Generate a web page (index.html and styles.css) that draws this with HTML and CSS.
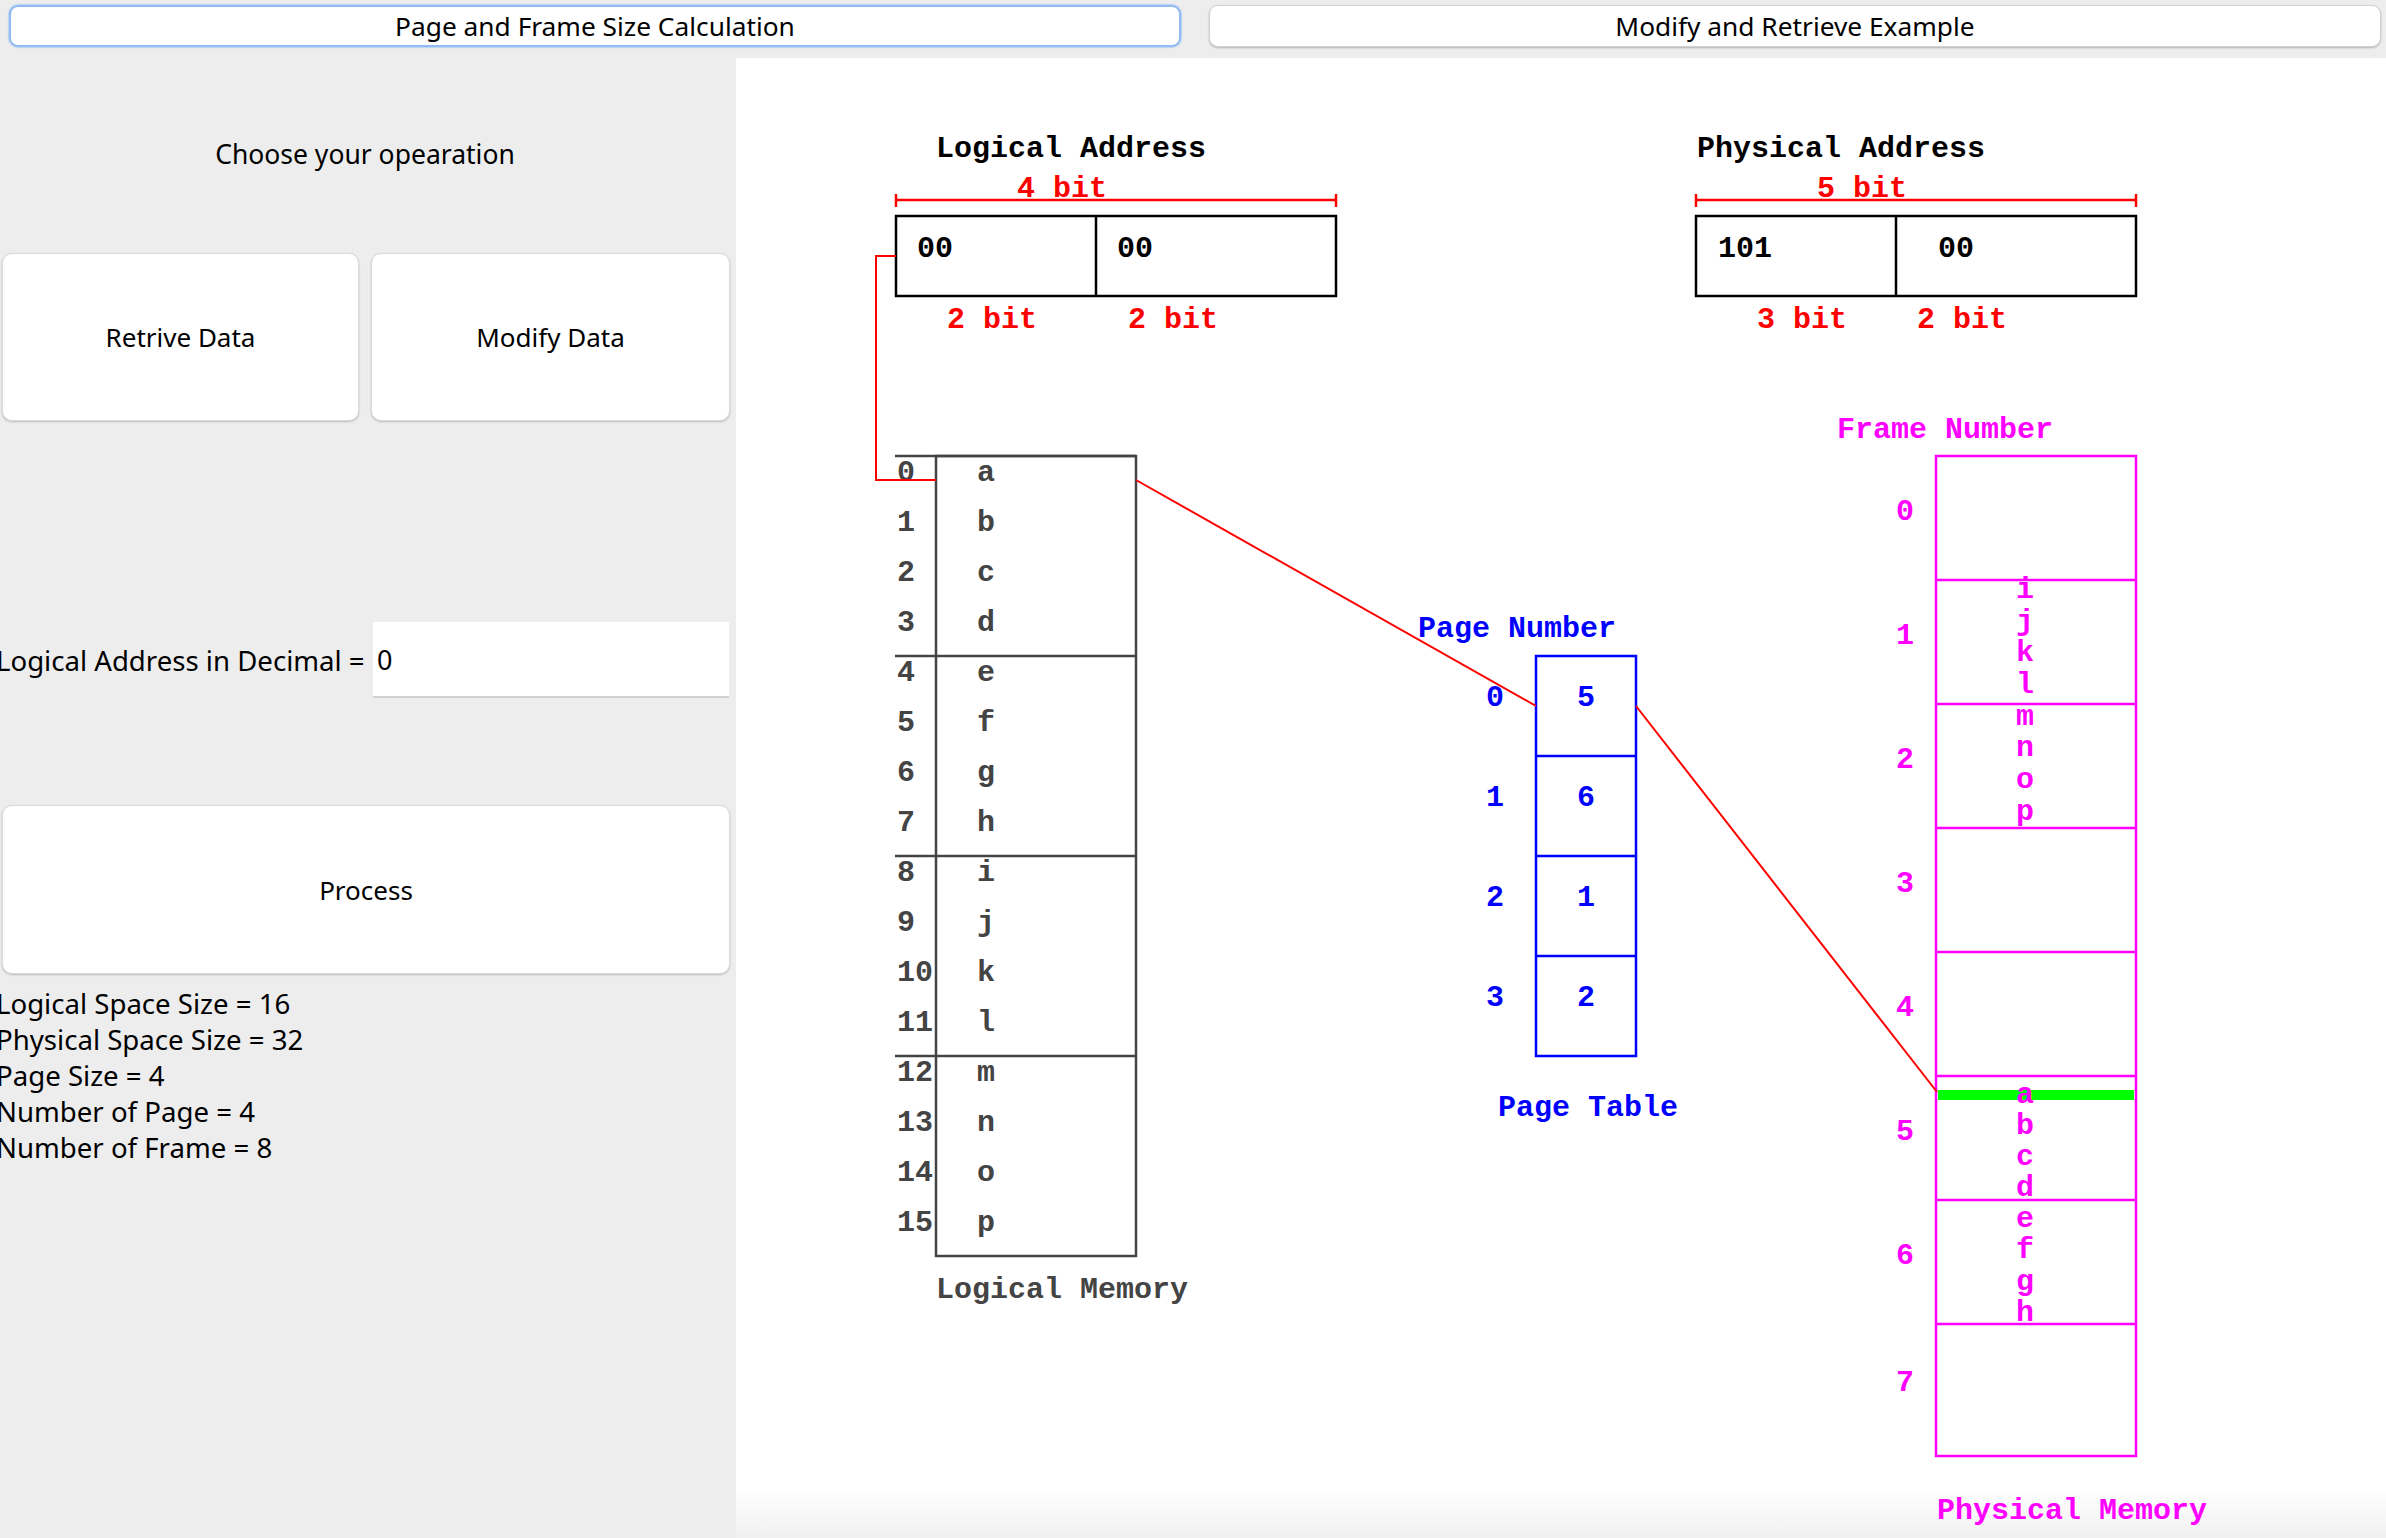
FILE: index.html
```html
<!DOCTYPE html>
<html>
<head>
<meta charset="utf-8">
<link rel="stylesheet" href="styles.css">
</head>
<body>
<div class="app">
  <div class="tabs">
    <div class="tab tab-active">Page and Frame Size Calculation</div>
    <div class="tab">Modify and Retrieve Example</div>
  </div>
  <div class="main">
    <aside class="side">
      <div class="title">Choose your opearation</div>
      <div class="btn-row">
        <div class="btn">Retrive Data</div>
        <div class="btn">Modify Data</div>
      </div>
      <div class="addr-row">
        <span class="addr-label">Logical Address in Decimal =</span>
        <div class="field">0</div>
      </div>
      <div class="btn btn-process">Process</div>
      <div class="stats">
        <div>Logical Space Size = 16</div>
        <div>Physical Space Size = 32</div>
        <div>Page Size = 4</div>
        <div>Number of Page = 4</div>
        <div>Number of Frame = 8</div>
      </div>
    </aside>
    <div class="canvas">
      <svg class="diagram" width="1650" height="1480" viewBox="736 58 1650 1480" xmlns="http://www.w3.org/2000/svg">
        <!-- Logical address -->
        <text class="t t-black" x="936" y="157">Logical Address</text>
        <text class="t t-red" x="1017" y="197">4 bit</text>
        <g class="s-red">
          <line x1="896" y1="200" x2="1336" y2="200"/>
          <line x1="896" y1="194" x2="896" y2="207"/>
          <line x1="1336" y1="194" x2="1336" y2="207"/>
        </g>
        <g class="s-black">
          <rect x="896" y="216" width="440" height="80"/>
          <line x1="1096" y1="216" x2="1096" y2="296"/>
        </g>
        <text class="t t-black" x="917" y="257">00</text>
        <text class="t t-black" x="1117" y="257">00</text>
        <text class="t t-red" x="947" y="328">2 bit</text>
        <text class="t t-red" x="1128" y="328">2 bit</text>

        <!-- Physical address -->
        <text class="t t-black" x="1697" y="157">Physical Address</text>
        <text class="t t-red" x="1817" y="197">5 bit</text>
        <g class="s-red">
          <line x1="1696" y1="200" x2="2136" y2="200"/>
          <line x1="1696" y1="194" x2="1696" y2="207"/>
          <line x1="2136" y1="194" x2="2136" y2="207"/>
        </g>
        <g class="s-black">
          <rect x="1696" y="216" width="440" height="80"/>
          <line x1="1896" y1="216" x2="1896" y2="296"/>
        </g>
        <text class="t t-black" x="1718" y="257">101</text>
        <text class="t t-black" x="1938" y="257">00</text>
        <text class="t t-red" x="1757" y="328">3 bit</text>
        <text class="t t-red" x="1917" y="328">2 bit</text>

        <!-- Logical memory -->
        <g class="s-gray">
          <rect x="936" y="456" width="200" height="800"/>
          <line x1="895" y1="456" x2="1136" y2="456"/>
          <line x1="895" y1="656" x2="1136" y2="656"/>
          <line x1="895" y1="856" x2="1136" y2="856"/>
          <line x1="895" y1="1056" x2="1136" y2="1056"/>
        </g>
        <g class="t t-gray">
          <text x="897" y="481">0</text><text x="977" y="481">a</text>
          <text x="897" y="531">1</text><text x="977" y="531">b</text>
          <text x="897" y="581">2</text><text x="977" y="581">c</text>
          <text x="897" y="631">3</text><text x="977" y="631">d</text>
          <text x="897" y="681">4</text><text x="977" y="681">e</text>
          <text x="897" y="731">5</text><text x="977" y="731">f</text>
          <text x="897" y="781">6</text><text x="977" y="781">g</text>
          <text x="897" y="831">7</text><text x="977" y="831">h</text>
          <text x="897" y="881">8</text><text x="977" y="881">i</text>
          <text x="897" y="931">9</text><text x="977" y="931">j</text>
          <text x="897" y="981">10</text><text x="977" y="981">k</text>
          <text x="897" y="1031">11</text><text x="977" y="1031">l</text>
          <text x="897" y="1081">12</text><text x="977" y="1081">m</text>
          <text x="897" y="1131">13</text><text x="977" y="1131">n</text>
          <text x="897" y="1181">14</text><text x="977" y="1181">o</text>
          <text x="897" y="1231">15</text><text x="977" y="1231">p</text>
          <text x="936" y="1298">Logical Memory</text>
        </g>

        <!-- Page table -->
        <text class="t t-blue" x="1418" y="637">Page Number</text>
        <g class="s-blue">
          <rect x="1536" y="656" width="100" height="400"/>
          <line x1="1536" y1="756" x2="1636" y2="756"/>
          <line x1="1536" y1="856" x2="1636" y2="856"/>
          <line x1="1536" y1="956" x2="1636" y2="956"/>
        </g>
        <g class="t t-blue mid">
          <text x="1495" y="706">0</text><text x="1586" y="706">5</text>
          <text x="1495" y="806">1</text><text x="1586" y="806">6</text>
          <text x="1495" y="906">2</text><text x="1586" y="906">1</text>
          <text x="1495" y="1006">3</text><text x="1586" y="1006">2</text>
        </g>
        <text class="t t-blue" x="1498" y="1116">Page Table</text>

        <!-- Physical memory -->
        <text class="t t-mag" x="1837" y="438">Frame Number</text>
        <rect class="green" x="1938" y="1090" width="196" height="10"/>
        <g class="s-mag">
          <rect x="1936" y="456" width="200" height="1000"/>
          <line x1="1936" y1="580" x2="2136" y2="580"/>
          <line x1="1936" y1="704" x2="2136" y2="704"/>
          <line x1="1936" y1="828" x2="2136" y2="828"/>
          <line x1="1936" y1="952" x2="2136" y2="952"/>
          <line x1="1936" y1="1076" x2="2136" y2="1076"/>
          <line x1="1936" y1="1200" x2="2136" y2="1200"/>
          <line x1="1936" y1="1324" x2="2136" y2="1324"/>
        </g>
        <g class="t t-mag mid">
          <text x="1905" y="520">0</text>
          <text x="1905" y="644">1</text>
          <text x="1905" y="768">2</text>
          <text x="1905" y="892">3</text>
          <text x="1905" y="1016">4</text>
          <text x="1905" y="1140">5</text>
          <text x="1905" y="1264">6</text>
          <text x="1905" y="1391">7</text>
          <text x="2025" y="598">i</text>
          <text x="2025" y="630">j</text>
          <text x="2025" y="661">k</text>
          <text x="2025" y="693">l</text>
          <text x="2025" y="725">m</text>
          <text x="2025" y="756">n</text>
          <text x="2025" y="788">o</text>
          <text x="2025" y="820">p</text>
          <text x="2025" y="1103">a</text>
          <text x="2025" y="1134">b</text>
          <text x="2025" y="1165">c</text>
          <text x="2025" y="1196">d</text>
          <text x="2025" y="1227">e</text>
          <text x="2025" y="1258">f</text>
          <text x="2025" y="1290">g</text>
          <text x="2025" y="1321">h</text>
        </g>
        <text class="t t-mag" x="1937" y="1519">Physical Memory</text>

        <!-- Red mapping path -->
        <g class="s-red thin">
          <polyline points="896,256 876,256 876,480 936,480"/>
          <line x1="1136" y1="480" x2="1536" y2="706"/>
          <line x1="1636" y1="706" x2="1937" y2="1092"/>
        </g>
      </svg>
    </div>
  </div>
</div>
</body>
</html>
```

FILE: styles.css
```css
* { box-sizing: border-box; }
html, body { margin: 0; padding: 0; }
body {
  width: 2386px;
  height: 1538px;
  overflow: hidden;
  background: #ededed;
  font-family: "Noto Sans", "Open Sans", sans-serif;
  font-size: 26px;
  color: #000;
}
.app { display: flex; flex-direction: column; height: 1538px; }

.tabs {
  display: grid;
  grid-template-columns: 1fr 1fr;
  column-gap: 28px;
  padding: 5px 5px 0 9px;
  height: 58px;
  flex: none;
}
.tab {
  height: 42px;
  background: #fff;
  border: 1px solid #d2d2d2;
  border-radius: 9px;
  box-shadow: 0 1px 2px rgba(0,0,0,0.25);
  display: flex;
  align-items: center;
  justify-content: center;
  line-height: 1;
  font-size: 26.3px;
}
.tab-active {
  border: 2px solid #93bbef;
  box-shadow: 0 0 1px 1px #b9d3f5;
}

.main { display: flex; flex: 1; min-height: 0; }

.side {
  width: 736px;
  flex: none;
  display: flex;
  flex-direction: column;
}
.title {
  margin-top: 78px;
  height: 36px;
  line-height: 36px;
  text-align: center;
  width: 730px;
  font-size: 26.5px;
}
.btn-row {
  margin-top: 81px;
  display: grid;
  grid-template-columns: 357px 359px;
  column-gap: 12px;
  padding-left: 2px;
}
.btn {
  height: 168px;
  background: #fff;
  border: 1px solid #dadada;
  border-radius: 10px;
  box-shadow: 0 1px 2px rgba(0,0,0,0.22);
  display: flex;
  align-items: center;
  justify-content: center;
}
.addr-row {
  margin-top: 201px;
  height: 76px;
  display: flex;
  align-items: center;
}
.addr-label { margin-left: -4px; white-space: nowrap; font-size: 27.6px; }
.field {
  margin-left: auto;
  margin-right: 7px;
  width: 356px;
  height: 76px;
  background: #fff;
  border-bottom: 2px solid #d0d0d0;
  display: flex;
  align-items: center;
  padding-left: 4px;
  font-size: 27px;
}
.btn-process {
  margin-top: 107px;
  margin-left: 2px;
  width: 728px;
  height: 169px;
}
.stats {
  margin-top: 11px;
  margin-left: -4px;
  line-height: 36px;
  font-size: 27.6px;
}

.canvas {
  flex: 1;
  background: linear-gradient(to bottom, #ffffff 0, #ffffff 1428px, #f1f1f1 1480px);
}
.diagram { display: block; }

.t {
  font-family: "Liberation Mono", "Courier New", monospace;
  font-weight: bold;
  font-size: 30px;
}
.mid text { text-anchor: middle; }
.t-black { fill: #000; }
.t-red { fill: #ff0000; }
.t-gray { fill: #444; }
.t-blue { fill: #0000ff; }
.t-mag { fill: #ff00ff; }

.s-red, .s-black, .s-gray, .s-blue, .s-mag { fill: none; stroke-width: 2.5; }
.s-red { stroke: #ff0000; }
.s-red.thin { stroke-width: 2; }
.s-black { stroke: #000; }
.s-gray { stroke: #444; }
.s-blue { stroke: #0000ff; }
.s-mag { stroke: #ff00ff; }
.green { fill: #00ff00; }
```
